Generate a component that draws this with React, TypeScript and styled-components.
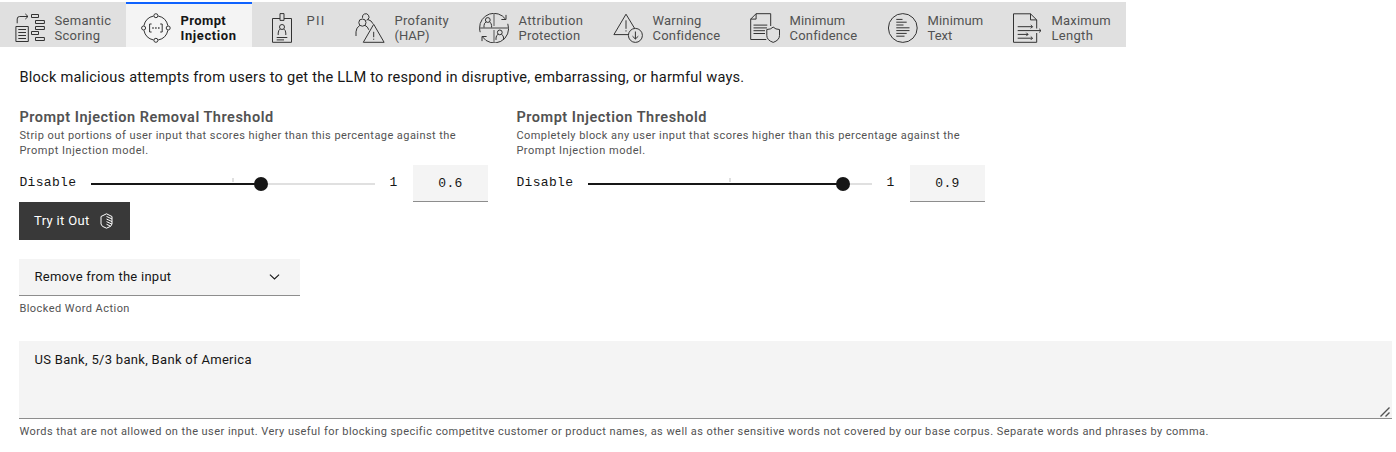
import React from "react";
import styled, { createGlobalStyle } from "styled-components";

const GlobalStyle = createGlobalStyle`
  * { box-sizing: border-box; }
  body {
    margin: 0;
    background: #fff;
    color: #161616;
    font-family: Roboto, "Noto Sans", sans-serif;
    font-size: 13px;
  }
  p, h3 { margin: 0; }
`;

const Page = styled.div`
  width: 1396px;
  height: 452px;
  padding-top: 2px;
  overflow: hidden;
`;

const TabBar = styled.nav`
  display: flex;
  width: 1126px;
  height: 45px;
  background: #e0e0e0;
`;

const Tab = styled.button<{ $width: number; $active?: boolean }>`
  display: flex;
  flex: none;
  gap: 9.5px;
  width: ${(p) => p.$width}px;
  height: 45px;
  padding: 11px 0 0 15px;
  border: 0;
  background: ${(p) => (p.$active ? "#f4f4f4" : "#e0e0e0")};
  box-shadow: ${(p) => (p.$active ? "inset 0 2px #0f62fe" : "none")};
  color: ${(p) => (p.$active ? "#161616" : "#525252")};
  font: ${(p) => (p.$active ? 700 : 400)} 13px/15px Roboto, sans-serif;
  text-align: left;
`;

const TabLabel = styled.span`
  display: flex;
  flex-direction: column;
  white-space: nowrap;
`;

const Line = styled.span<{ $track?: number }>`
  letter-spacing: ${(p) => p.$track ?? 0}px;
  white-space: nowrap;
`;

const Pictogram = styled.svg`
  flex: none;
  width: 30px;
  height: 30px;
  fill: none;
  stroke: #333;
  stroke-width: 1;
`;

const Content = styled.main`
  padding: 22px 4px 0 19px;
`;

const Intro = styled.p`
  height: 17px;
  padding-left: 0.5px;
  font-size: 14.6px;
  line-height: 17px;
`;

const Thresholds = styled.section`
  display: flex;
  gap: 28px;
  margin-top: 23px;
`;

const Threshold = styled.div`
  width: 469px;
`;

const Heading = styled.h3`
  height: 19px;
  padding-left: 0.4px;
  color: #525252;
  font-size: 14.5px;
  font-weight: 600;
  line-height: 17px;
`;

const Helper = styled.p`
  display: flex;
  flex-direction: column;
  padding-left: 0.4px;
  color: #525252;
  font-size: 11px;
  line-height: 15px;
`;

const SliderRow = styled.div`
  display: flex;
  align-items: center;
  height: 37px;
  margin-top: 7px;
  font: 13px/17px "Liberation Mono", monospace;
`;

const MinLabel = styled.span`
  width: 72px;
  padding: 0 0 2px 0.5px;
  letter-spacing: 0.32px;
`;

const MaxLabel = styled.span`
  width: 24px;
  padding: 0 0 2px 0.5px;
`;

const Track = styled.div`
  position: relative;
  width: 284px;
  height: 2px;
  margin-right: 14px;
  background: #e0e0e0;
`;

const Filled = styled.div`
  height: 2px;
  background: #161616;
`;

const Tick = styled.i`
  position: absolute;
  left: 141px;
  top: -5px;
  width: 2px;
  height: 4px;
  background: #e0e0e0;
`;

const Thumb = styled.i`
  position: absolute;
  top: -6px;
  width: 14px;
  height: 14px;
  margin-left: -7px;
  border-radius: 50%;
  background: #161616;
`;

const NumberField = styled.div`
  width: 75px;
  height: 37px;
  margin-left: auto;
  border-bottom: 1px solid #8d8d8d;
  background: #f4f4f4;
  line-height: 38px;
  text-align: center;
  letter-spacing: 0.3px;
`;

const TryButton = styled.button`
  display: flex;
  align-items: center;
  justify-content: space-between;
  width: 111px;
  height: 38px;
  padding: 0 17px 0 15px;
  border: 0;
  background: #393939;
  color: #fff;
  font: 13px/17px Roboto, sans-serif;
`;

const ButtonText = styled.span`
  padding-bottom: 2px;
`;

const Select = styled.div`
  display: flex;
  align-items: center;
  justify-content: space-between;
  width: 281px;
  height: 37px;
  margin-top: 19px;
  padding: 0 18px 2px 15.5px;
  border-bottom: 1px solid #8d8d8d;
  background: #f4f4f4;
`;

const FieldHelper = styled(Helper)`
  margin-top: 5px;
`;

const WordsField = styled.div`
  display: flex;
  justify-content: space-between;
  height: 78px;
  margin-top: 25px;
  padding: 10px 1px 0 15.5px;
  border-bottom: 1px solid #8d8d8d;
  background: #f4f4f4;
  line-height: 17px;
`;

const Grip = styled.svg`
  align-self: flex-end;
`;

const person = (x: number, y: number) => (
  <g transform={`translate(${x} ${y})`}>
    <circle r="2.4" />
    <path d="M-3.8 7.5V5.6Q-3.8 3 -1.6 1.8M1.6 1.8Q3.8 3 3.8 5.6V7.5" />
  </g>
);

const icons: Record<string, React.ReactNode> = {
  scoring: (
    <>
      <path d="M2.2 10.3V6Q2.2 3.5 4.7 3.5H13M10.3 .9L13 3.5 10.3 6.1" />
      <path d="M.9 13.5H13.3V28.5H.9ZM3.3 16.5H11M3.3 19.5H11M3.3 22.5H11M3.3 25.5H11" />
      <path d="M16.5 1.5H23.5V4.5H16.5ZM20.5 7.5H29.4V10.5H20.5ZM20.5 13.5H29.4V16.5H20.5ZM16.5 18.5H23.5V21.5H16.5ZM20.5 24.5H29.4V27.5H20.5Z" />
    </>
  ),
  prompt: (
    <>
      <path d="M17.2 3A12.5 12.5 0 0 1 26.9 12.7M26.9 17.3A12.5 12.5 0 0 1 17.2 27M12.6 27A12.5 12.5 0 0 1 2.9 17.3M2.9 12.7A12.5 12.5 0 0 1 12.6 3" />
      <circle cx="14.9" cy="2.7" r="2" /><circle cx="27.2" cy="15" r="2" />
      <circle cx="14.9" cy="27.3" r="2" /><circle cx="2.6" cy="15" r="2" />
      <path d="M10.6 11H8.6V19H10.6M19.2 11H21.2V19H19.2" />
      <path d="M11.3 15h1.4M14.2 15h1.4M17.1 15h1.4" strokeWidth="1.4" />
    </>
  ),
  badge: (
    <>
      <path d="M13 5.5H5.5V29.3H24.5V5.5H17M13 .6H17V7.4H13Z" />
      <circle cx="15" cy="14" r="2.5" />
      <path d="M11.2 22V20Q11.2 17.2 13.4 15.9M16.6 15.9Q18.8 17.2 18.8 20V22" />
      <path d="M9.7 24.5H20.3M9.7 26.9H17" />
    </>
  ),
  profanity: (
    <>
      <path d="M7.5 4.8A3.3 3.3 0 1 1 12.9 6.5L11.6 7.2M12.9 6.5Q16.6 7.4 18 10.8" />
      <circle cx="7.4" cy="9.6" r="3.6" />
      <path d="M1 23V18.8Q1 14.8 4.8 12.4M10 12.4Q12.8 13.6 13.8 16.8" />
      <path d="M18.7 11.3L29.1 29.3H8.3ZM18.7 18.8V24.2M18.7 25.7V26.8" />
    </>
  ),
  attribution: (
    <>
      <path d="M26.6 6.2A14.4 14.4 0 0 0 .6 15A14.4 14.4 0 0 0 1.2 19.2M28.8 10.8A14.4 14.4 0 0 1 3.4 23.8M27 1.9V6.5H22.4M3 28.1V23.5H7.6" />
      <path d="M15 .6V13M15 17V29.4M.6 15H29.4" stroke="#777" strokeWidth="1.3" />
      {person(8.8, 7)}
      {person(20.8, 19.4)}
    </>
  ),
  warning: (
    <>
      <path d="M15.3 21.6H.9L13 1.2 21.5 15.2M13 7.3V15.8M13 17.3V18.5" />
      <circle cx="22.4" cy="22.4" r="7" />
      <path d="M22.4 18.5V26M19.5 23.2L22.4 26 25.3 23.2" />
    </>
  ),
  document: (
    <>
      <path d="M16.3 26.5H.7V6.1L6.1 .7H20.7V13M.7 6.1H6.1V.7M3.5 12.1H17.3M3.5 14.9H17M3.5 17.7H15M3.5 20.5H15" />
      <path d="M23.2 14.1Q25.5 16.5 29.5 16.5V22.5Q29.5 27.2 23.2 29.4Q16.8 27.2 16.8 22.5V16.5Q20.8 16.5 23.2 14.1Z" />
    </>
  ),
  text: (
    <>
      <circle cx="14.8" cy="15" r="14.4" />
      <path d="M8.3 6.4H14.5M8.3 9.2H18.7M8.3 12H15.5M8.3 14.8H21.5M8.3 17.6H21.5M8.3 20.4H18.7M8.3 23.2H16.5" />
    </>
  ),
  length: (
    <>
      <path d="M24.7 15.5V6.9L18.5 .8H1.5V29.3H24.7V20M18.5 .8V6.9H24.7" />
      <path d="M5.7 13.7H20.5M18.8 12L20.5 13.7 18.8 15.4M5.7 17.6H29M27.2 15.8L29 17.6 27.2 19.4M5.7 21.4H16M14.3 19.7L16 21.4 14.3 23.1M5.7 25.2H20.5M18.8 23.5L20.5 25.2 18.8 26.9" />
    </>
  ),
};

type TabItem = { icon: string; width: number; lines: [string, number][]; active?: boolean };

const tabs: TabItem[] = [
  { icon: "scoring", width: 126, lines: [["Semantic", 0.3], ["Scoring", 0.25]] },
  { icon: "prompt", width: 126, lines: [["Prompt", 0.4], ["Injection", 0.6]], active: true },
  { icon: "badge", width: 88, lines: [["PII", 1.2]] },
  { icon: "profanity", width: 124, lines: [["Profanity", 0.25], ["(HAP)", 0]] },
  { icon: "attribution", width: 134, lines: [["Attribution", 0.35], ["Protection", 0.2]] },
  { icon: "warning", width: 137, lines: [["Warning", 0.2], ["Confidence", 0.2]] },
  { icon: "document", width: 138, lines: [["Minimum", 0.15], ["Confidence", 0.2]] },
  { icon: "text", width: 124, lines: [["Minimum", 0.15], ["Text", 0]] },
  { icon: "length", width: 129, lines: [["Maximum", 0.2], ["Length", 0.3]] },
];

function Slider({ value }: { value: number }) {
  return (
    <SliderRow>
      <MinLabel>Disable</MinLabel>
      <Track>
        <Tick />
        <Filled style={{ width: `${value * 100}%` }} />
        <Thumb style={{ left: Math.floor(value * 284) }} />
      </Track>
      <MaxLabel>1</MaxLabel>
      <NumberField>{value}</NumberField>
    </SliderRow>
  );
}

export default function App() {
  return (
    <Page>
      <GlobalStyle />
      <TabBar>
        {tabs.map((tab) => (
          <Tab key={tab.icon} $width={tab.width} $active={tab.active}>
            <Pictogram viewBox="0 0 30 30">{icons[tab.icon]}</Pictogram>
            <TabLabel>
              {tab.lines.map(([text, track]) => (
                <Line key={text} $track={track}>{text}</Line>
              ))}
            </TabLabel>
          </Tab>
        ))}
      </TabBar>
      <Content>
        <Intro>
          <Line $track={0.22}>Block malicious attempts from users to get the LLM to respond in disruptive, embarrassing, or harmful ways.</Line>
        </Intro>
        <Thresholds>
          <Threshold>
            <Heading><Line $track={0.51}>Prompt Injection Removal Threshold</Line></Heading>
            <Helper>
              <Line $track={0.44}>Strip out portions of user input that scores higher than this percentage against the</Line>
              <Line $track={0.53}>Prompt Injection model.</Line>
            </Helper>
            <Slider value={0.6} />
          </Threshold>
          <Threshold>
            <Heading><Line $track={0.53}>Prompt Injection Threshold</Line></Heading>
            <Helper>
              <Line $track={0.45}>Completely block any user input that scores higher than this percentage against the</Line>
              <Line $track={0.53}>Prompt Injection model.</Line>
            </Helper>
            <Slider value={0.9} />
          </Threshold>
        </Thresholds>
        <TryButton>
          <ButtonText><Line $track={0.35}>Try it Out</Line></ButtonText>
          <svg width="14" height="16" viewBox="0 0 14 16" fill="none" stroke="#fff" strokeWidth="1">
            <path d="M7.5 .8L2 3.5V11Q2 13.5 7.5 15.2M7.5 .8L13 3.5V11Q13 13.5 7.5 15.2M7.5 3.4L13 6M7.5 6L13 8.6M7.5 8.6L13 11.2M7.5 11.2L11.5 13.2" />
          </svg>
        </TryButton>
        <Select>
          <Line $track={0.26}>Remove from the input</Line>
          <svg width="14" height="14" viewBox="0 0 14 14" fill="none" stroke="#161616" strokeWidth="1.1">
            <path d="M1.9 5.6L6.5 10L11.1 5.6" />
          </svg>
        </Select>
        <FieldHelper><Line $track={0.46}>Blocked Word Action</Line></FieldHelper>
        <WordsField>
          <Line $track={0.31}>US Bank, 5/3 bank, Bank of America</Line>
          <Grip width="12" height="12" viewBox="0 0 12 12" stroke="#525252" strokeWidth="1.4">
            <path d="M1.5 10.5L10.5 1.5M6.5 10.5L10.5 6.5" />
          </Grip>
        </WordsField>
        <FieldHelper>
          <Line $track={0.452}>Words that are not allowed on the user input. Very useful for blocking specific competitve customer or product names, as well as other sensitive words not covered by our base corpus. Separate words and phrases by comma.</Line>
        </FieldHelper>
      </Content>
    </Page>
  );
}
